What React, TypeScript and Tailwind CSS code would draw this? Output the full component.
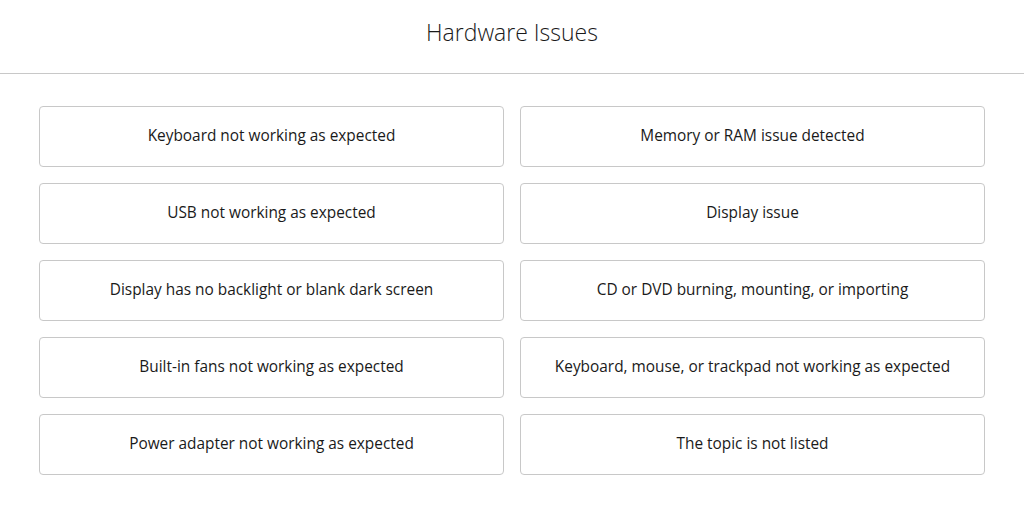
import React from 'react';

const topics = [
  'Keyboard not working as expected',
  'Memory or RAM issue detected',
  'USB not working as expected',
  'Display issue',
  'Display has no backlight or blank dark screen',
  'CD or DVD burning, mounting, or importing',
  'Built-in fans not working as expected',
  'Keyboard, mouse, or trackpad not working as expected',
  'Power adapter not working as expected',
  'The topic is not listed',
];

const App: React.FC = () => {
  return (
    <div className="min-h-screen bg-white text-[#222] font-['Open_Sans',sans-serif]">
      {/* Header */}
      <div className="h-[74px] border-b border-[#c8c8c8] flex items-center justify-center pb-[8px]">
        <h1 className="text-[23px] font-light text-[#1a1a1a]">Hardware Issues</h1>
      </div>

      {/* Topics */}
      <div className="grid grid-cols-2 gap-x-[16px] gap-y-[16px] px-[39px] pt-[32px]">
        {topics.map(topic => (
          <button
            key={topic}
            className="h-[61px] rounded-[4px] border border-[#c8c8c8] bg-white flex items-center justify-center pb-[2px] text-[15.4px] text-[#1a1a1a]"
          >
            {topic}
          </button>
        ))}
      </div>
    </div>
  );
};

export default App;
